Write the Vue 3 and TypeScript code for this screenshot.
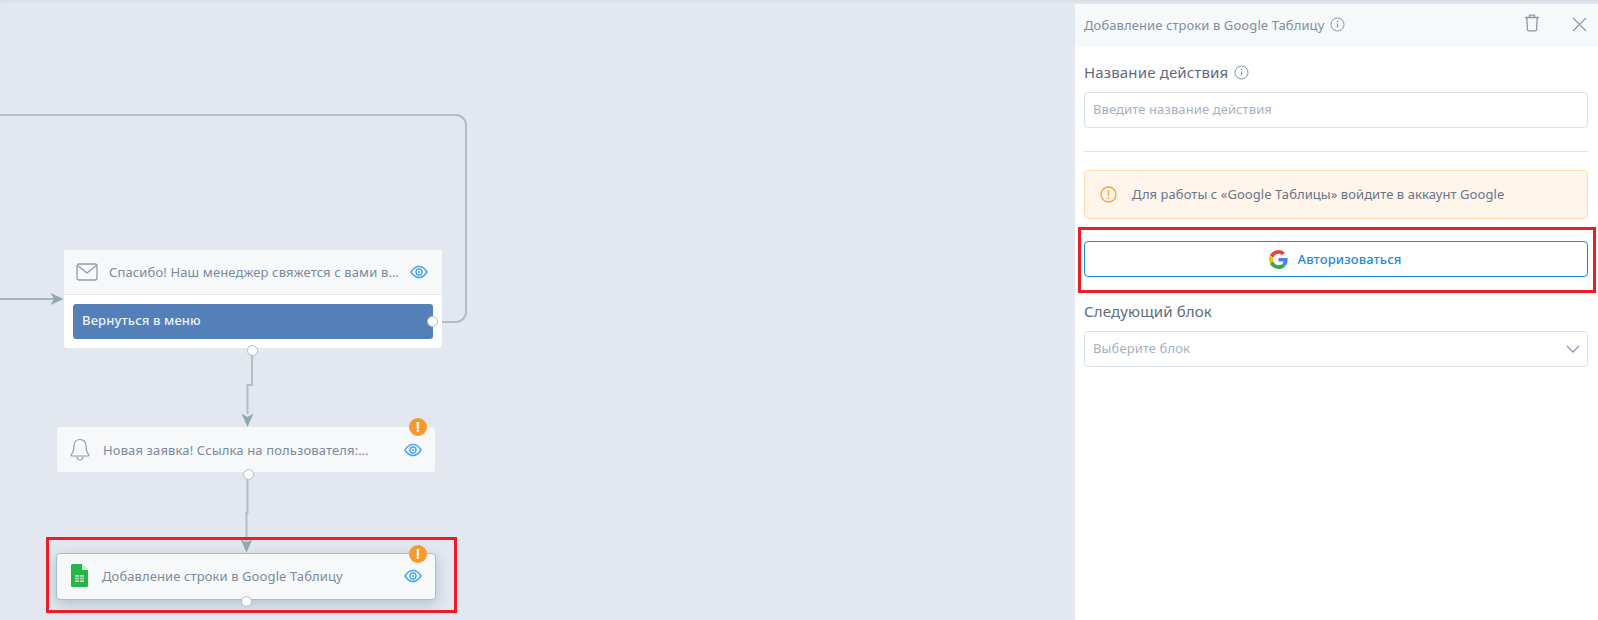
<script setup lang="ts">
const eyePath = "M1 7c2.2-3.6 5-5.4 8-5.4S14.800 3.400 17 7c-2.200 3.600-5 5.400-8 5.400S3.200 10.600 1 7z";
</script>

<template>
  <div class="page">
    <div class="canvas">
      <svg class="edges" width="1075" height="620" fill="none">
        <g stroke="#b0bfc4" stroke-width="2">
          <path d="M0 115H456a10 10 0 0 1 10 10V312a10 10 0 0 1-10 10H433" />
          <path d="M0 299H54" stroke="#a5b6ba" />
          <path d="M252 352V385H247.500V414" />
          <path d="M247.500 478V513H246.500V542" />
        </g>
        <g fill="#95a8ac">
          <path d="M63.500 299L50.500 293L54 299L50.500 305Z" />
          <path d="M247.500 427L241.500 413.500L247.500 417L253.500 413.500Z" />
          <path d="M246.500 552.500L240.500 539L246.500 542.500L252.500 539Z" />
        </g>
      </svg>

      <div class="node message">
        <div class="node-head">
          <svg class="node-icon" width="22" height="18" viewBox="0 0 22 18" fill="none" stroke="#8e9cab" stroke-width="1.300">
            <rect x="1" y="1" width="20" height="16" rx="2" />
            <path d="M1.500 2.500L11 10l9.500-7.500" />
          </svg>
          <span class="node-text">Спасибо! Наш менеджер свяжется с вами в…</span>
          <svg class="eye" width="18" height="14" viewBox="0 0 18 14" fill="none">
            <path :d="eyePath" stroke="#4ba6ee" stroke-width="1.500" />
            <circle cx="9" cy="7" r="3" stroke="#4ba6ee" stroke-width="1.400" />
            <circle cx="9" cy="7" r="1.100" fill="#4ba6ee" />
          </svg>
        </div>
        <div class="node-body">
          <div class="reply">Вернуться в меню</div>
        </div>
        <i class="dot dot-right"></i>
        <i class="dot dot-bottom"></i>
      </div>

      <div class="node notify">
        <div class="node-head">
          <svg class="node-icon" width="20" height="24" viewBox="0 0 20 24" fill="none" stroke="#8e9cab" stroke-width="1.200">
            <path d="M10 1.500c-3.700 0-6 2.800-6 6.300 0 4-.8 6.700-2.700 8.900-.5.600-.1 1.300.6 1.300h16.200c.7 0 1.100-.7.600-1.300C16.800 14.500 16 11.800 16 7.800c0-3.500-2.300-6.300-6-6.300z" />
            <path d="M7 18.500c0 2 1.300 3.500 3 3.500s3-1.500 3-3.500" />
          </svg>
          <span class="node-text">Новая заявка! Ссылка на пользователя:…</span>
          <svg class="eye" width="18" height="14" viewBox="0 0 18 14" fill="none">
            <path :d="eyePath" stroke="#4ba6ee" stroke-width="1.500" />
            <circle cx="9" cy="7" r="3" stroke="#4ba6ee" stroke-width="1.400" />
            <circle cx="9" cy="7" r="1.100" fill="#4ba6ee" />
          </svg>
        </div>
        <span class="badge">!</span>
        <i class="dot dot-bottom"></i>
      </div>

      <div class="node sheet">
        <div class="node-head">
          <svg class="node-icon" width="17" height="23" viewBox="0 0 17 23">
            <path d="M1.500 0H11l6 6v15.500a1.500 1.500 0 0 1-1.500 1.500h-14A1.500 1.500 0 0 1 0 21.500v-20A1.500 1.500 0 0 1 1.500 0z" fill="#28b446" />
            <path d="M11 0l6 6h-6z" fill="#d8ecd9" />
            <path d="M4 11h9v7H4z" fill="#a9dfb4" />
            <path d="M4 13.300h9M4 15.700h9M8.500 11v7" stroke="#28b446" stroke-width=".8" />
          </svg>
          <span class="node-text">Добавление строки в Google Таблицу</span>
          <svg class="eye" width="18" height="14" viewBox="0 0 18 14" fill="none">
            <path :d="eyePath" stroke="#4ba6ee" stroke-width="1.500" />
            <circle cx="9" cy="7" r="3" stroke="#4ba6ee" stroke-width="1.400" />
            <circle cx="9" cy="7" r="1.100" fill="#4ba6ee" />
          </svg>
        </div>
        <span class="badge">!</span>
        <i class="dot dot-bottom"></i>
      </div>

      <div class="mark mark-node"></div>
    </div>

    <aside class="panel">
      <header class="panel-head">
        <span class="panel-title">Добавление строки в Google Таблицу</span>
        <svg class="info" width="15" height="15" viewBox="0 0 15 15" fill="none">
          <circle cx="7.500" cy="7.500" r="6.500" stroke="#8a98a9" />
          <path d="M7.500 6.500v4" stroke="#8a98a9" stroke-width="1.300" />
          <circle cx="7.500" cy="4.400" r=".8" fill="#8a98a9" />
        </svg>
        <svg class="trash" width="16" height="18" viewBox="0 0 16 18" fill="none" stroke="#8a98a9" stroke-width="1.300">
          <path d="M1 3.500h14M5.500 3.500V1.200h5v2.300M2.700 3.500l.8 12.200c0 .6.500 1.100 1.100 1.100h6.800c.6 0 1.100-.5 1.100-1.100l.8-12.200" />
        </svg>
        <svg class="close" width="15" height="15" viewBox="0 0 15 15" fill="none" stroke="#8a98a9" stroke-width="1.100">
          <path d="M1 1l13 13M14 1L1 14" />
        </svg>
      </header>

      <div class="panel-body">
        <div class="label">
          Название действия
          <svg width="15" height="15" viewBox="0 0 15 15" fill="none">
            <circle cx="7.500" cy="7.500" r="6.500" stroke="#8a98a9" />
            <path d="M7.500 6.500v4" stroke="#8a98a9" stroke-width="1.300" />
            <circle cx="7.500" cy="4.400" r=".8" fill="#8a98a9" />
          </svg>
        </div>
        <div class="field">Введите название действия</div>

        <hr class="divider" />

        <div class="alert">
          <svg width="17" height="17" viewBox="0 0 17 17" fill="none">
            <circle cx="8.500" cy="8.500" r="7.500" stroke="#f7a13c" stroke-width="1.300" />
            <path d="M8.500 4.300v5.400" stroke="#f7a13c" stroke-width="1.500" />
            <circle cx="8.500" cy="12" r=".9" fill="#f7a13c" />
          </svg>
          <span>Для работы с «Google Таблицы» войдите в аккаунт Google</span>
        </div>

        <div class="auth-wrap">
          <button class="auth" type="button">
            <svg width="19" height="19" viewBox="0 0 48 48">
              <path fill="#EA4335" d="M24 9.500c3.540 0 6.710 1.220 9.210 3.600l6.850-6.850C35.900 2.380 30.470 0 24 0 14.620 0 6.510 5.380 2.560 13.220l7.980 6.190C12.430 13.720 17.740 9.500 24 9.500z" />
              <path fill="#4285F4" d="M46.980 24.550c0-1.570-.15-3.090-.38-4.550H24v9.020h12.940c-.58 2.960-2.260 5.480-4.780 7.180l7.730 6c4.510-4.180 7.090-10.360 7.090-17.650z" />
              <path fill="#FBBC05" d="M10.530 28.590c-.48-1.450-.76-2.990-.76-4.590s.27-3.140.76-4.590l-7.980-6.190C.92 16.460 0 20.120 0 24c0 3.880.92 7.540 2.560 10.780l7.970-6.190z" />
              <path fill="#34A853" d="M24 48c6.480 0 11.930-2.130 15.890-5.810l-7.730-6c-2.150 1.450-4.920 2.300-8.160 2.300-6.260 0-11.570-4.220-13.470-9.910l-7.980 6.190C6.510 42.620 14.620 48 24 48z" />
            </svg>
            <span>Авторизоваться</span>
          </button>
          <div class="mark"></div>
        </div>

        <div class="label next">Следующий блок</div>
        <div class="field select">
          <span>Выберите блок</span>
          <svg width="14" height="8" viewBox="0 0 14 8" fill="none" stroke="#8a98a9" stroke-width="1.300">
            <path d="M1 1l6 6 6-6" />
          </svg>
        </div>
      </div>
    </aside>
  </div>
</template>

<style>
html,
body {
  margin: 0;
  overflow: hidden;
}
</style>

<style scoped>
.page {
  display: flex;
  width: 1598px;
  height: 620px;
  overflow: hidden;
  background: #e3e8f0;
  font-family: "Noto Sans", "Open Sans", sans-serif;
  box-shadow: inset 0 3px 3px -1px #d8dee6;
}

.canvas {
  position: relative;
  flex: 1;
}

.edges {
  position: absolute;
  top: 0;
  left: 0;
}

.node {
  position: absolute;
  box-sizing: border-box;
  border-radius: 3px;
  background: #f6f8fa;
  color: #7b8a9c;
  font-size: 13px;
  letter-spacing: 0.13px;
}

.message {
  top: 250px;
  left: 64px;
  width: 378px;
  height: 98px;
  background: #fff;
}

.notify {
  top: 427px;
  left: 57px;
  width: 378px;
  height: 45px;
}

.sheet {
  top: 552.500px;
  left: 56px;
  width: 380px;
  height: 47px;
  border: 1.500px solid #aebcc4;
  border-radius: 4px;
  box-shadow: 0 4px 14px rgba(120, 140, 160, 0.45);
  letter-spacing: 0.1px;
}

.node-head {
  display: flex;
  align-items: center;
  height: 45px;
  padding: 0 13px 0 12px;
  box-sizing: border-box;
}

.message .node-head {
  padding-right: 14px;
  background: #f6f8fa;
  border-bottom: 1px solid #e7ebef;
  border-radius: 3px 3px 0 0;
}

.notify .node-head {
  padding-left: 13px;
}

.sheet .node-head {
  height: 44px;
}

.node-icon {
  flex: none;
}

.node-text {
  flex: 1;
  margin-left: 13px;
  white-space: nowrap;
}

.message .node-text {
  margin-left: 11px;
}

.sheet .node-icon {
  margin-left: 2px;
}

.sheet .node-text {
  margin-left: 14px;
}

.node-body {
  padding: 9px 9px;
}

.reply {
  box-sizing: border-box;
  height: 35px;
  padding-left: 9px;
  border-radius: 3px;
  background: #5380b8;
  color: #eef2f8;
  font-size: 13px;
  font-weight: 500;
  line-height: 33px;
}

.dot {
  position: absolute;
  box-sizing: border-box;
  width: 11px;
  height: 11px;
  border: 1.500px solid #b0bdc5;
  border-radius: 50%;
  background: #fff;
}

.dot-right {
  top: 66px;
  right: 4px;
}

.dot-bottom {
  bottom: -8px;
  left: 183px;
}

.notify .dot-bottom {
  bottom: -8px;
  left: 186px;
}

.sheet .dot-bottom {
  bottom: -8px;
  left: 184px;
}

.badge {
  position: absolute;
  top: -9px;
  right: 8px;
  width: 18px;
  height: 18px;
  border-radius: 50%;
  background: #f8982b;
  color: #fff;
  font-size: 14px;
  font-weight: 700;
  line-height: 18px;
  text-align: center;
}

.mark {
  position: absolute;
  box-sizing: border-box;
  top: -14px;
  right: -8px;
  bottom: -16px;
  left: -6px;
  border: 3px solid #ee1c25;
  pointer-events: none;
}

.mark-node {
  top: 536.500px;
  right: auto;
  bottom: auto;
  left: 46px;
  width: 411px;
  height: 76.500px;
}

.panel {
  display: flex;
  flex: none;
  flex-direction: column;
  width: 523px;
  margin-top: 4px;
  background: #fff;
}

.panel-head {
  display: flex;
  align-items: center;
  box-sizing: border-box;
  height: 43px;
  padding: 0 11px 2px 9px;
  background: #f6f8fa;
  color: #7f8fa4;
  font-size: 13px;
  letter-spacing: 0.09px;
}

.info {
  margin-left: 6px;
}

.trash {
  margin-left: auto;
  margin-top: -3px;
}

.close {
  margin-left: 32px;
}

.panel-body {
  padding: 0 10px 0 9px;
}

.label {
  display: flex;
  align-items: center;
  gap: 6px;
  height: 20px;
  margin-top: 15px;
  color: #5c6b80;
  font-size: 15px;
  letter-spacing: 0.15px;
}

.field {
  display: flex;
  align-items: center;
  box-sizing: border-box;
  height: 36px;
  margin-top: 10px;
  padding: 0 8px 2px;
  border: 1px solid #d9dfe6;
  border-radius: 4px;
  color: #a6b1bf;
  font-size: 13px;
  letter-spacing: 0.1px;
}

.divider {
  height: 1px;
  margin: 23px 0 18px;
  border: 0;
  background: #dfe3e8;
}

.alert {
  display: flex;
  align-items: center;
  gap: 15px;
  box-sizing: border-box;
  height: 49px;
  padding: 0 0 2px 15px;
  border: 1px solid #fddcb4;
  border-radius: 4px;
  background: #fff5eb;
  color: #66758a;
  font-size: 13px;
  letter-spacing: 0.06px;
}

.alert svg {
  margin-top: 2px;
}

.auth-wrap {
  position: relative;
  margin-top: 22px;
}

.auth {
  display: flex;
  align-items: center;
  justify-content: center;
  gap: 10px;
  box-sizing: border-box;
  width: 100%;
  height: 36px;
  padding: 0 2px 0 0;
  border: 1px solid #1e88d9;
  border-radius: 4px;
  background: #fff;
  color: #1e88e5;
  font-family: inherit;
  font-size: 13px;
  font-weight: 500;
  letter-spacing: 0.1px;
}

.next {
  margin-top: 24px;
}

.select {
  justify-content: space-between;
  padding-right: 7px;
}

.select svg {
  margin-top: 2px;
}
</style>
